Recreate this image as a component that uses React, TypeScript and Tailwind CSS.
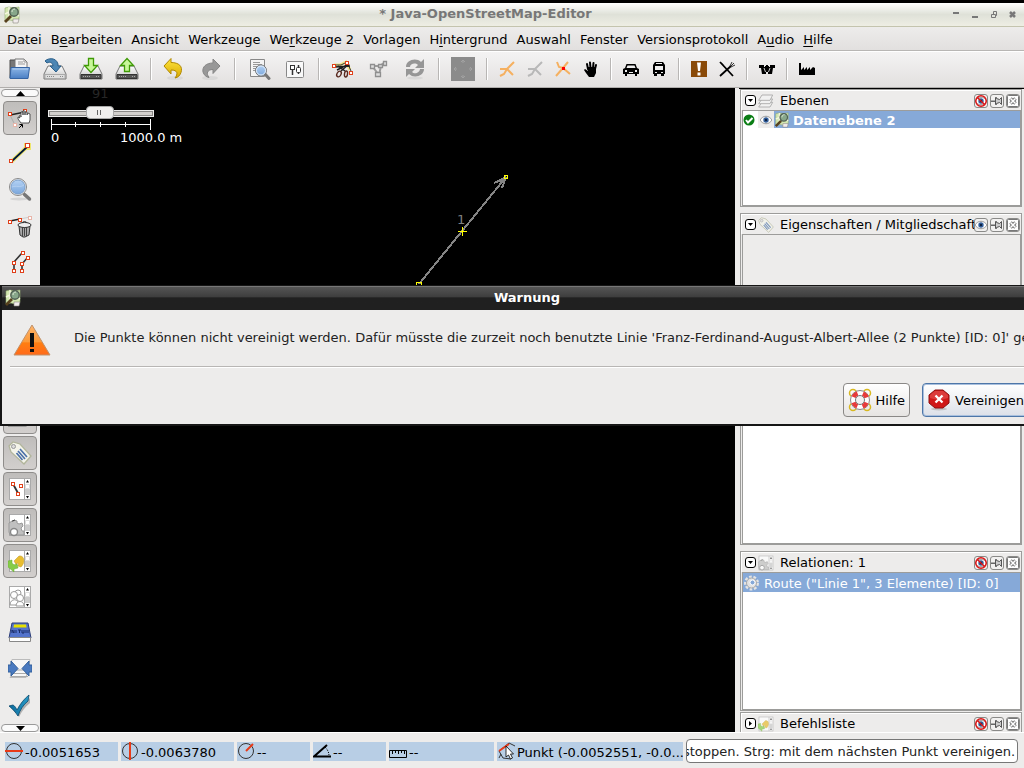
import { useEffect, useRef } from 'react';
import type { ReactNode } from 'react';

type IconProps = { size?: number; className?: string; children?: ReactNode };

function Svg({ size = 24, className = '', children }: IconProps) {
  return (
    <svg width={size} height={size} viewBox={`0 0 ${size} ${size}`} fill="none" className={`shrink-0 ${className}`} aria-hidden="true">
      {children}
    </svg>
  );
}

// Gradients shared by all icons
function Defs() {
  return (
    <svg className="absolute size-0" aria-hidden="true">
      <defs>
        <linearGradient id="folder" x2="0" y2="1">
          <stop stopColor="#8db6e6" />
          <stop offset="1" stopColor="#4a7fc4" />
        </linearGradient>
        <linearGradient id="metal" x2="0" y2="1">
          <stop stopColor="#fdfdfd" />
          <stop offset="1" stopColor="#c4c4c4" />
        </linearGradient>
        <linearGradient id="lens" x2="0" y2="1">
          <stop stopColor="#b4d2f4" />
          <stop offset="1" stopColor="#7ba7dc" />
        </linearGradient>
        <linearGradient id="gold" x2="0" y2="1">
          <stop stopColor="#ffe53e" />
          <stop offset="1" stopColor="#d8a800" />
        </linearGradient>
        <linearGradient id="warn" x2="0" y2="1">
          <stop stopColor="#ffb469" />
          <stop offset="0.55" stopColor="#fb9a3a" />
          <stop offset="0.6" stopColor="#ff7e12" />
          <stop offset="1" stopColor="#ff6a1a" />
        </linearGradient>
        <linearGradient id="tick" x2="1" y2="0">
          <stop stopColor="#0c6a9c" />
          <stop offset="1" stopColor="#2a9cc8" />
        </linearGradient>
      </defs>
    </svg>
  );
}

function Node({ x, y, faded = false, s = 3 }: { x: number; y: number; faded?: boolean; s?: number }) {
  return <rect x={x} y={y} width={s} height={s} fill="#fff" stroke={faded ? '#e8b4a8' : '#e0401a'} />;
}

function AppLogo({ size = 18 }: { size?: number }) {
  return (
    <svg width={size} height={size} viewBox="0 0 18 18" fill="none" className="shrink-0" aria-hidden="true">
      <path d="M2 2l4-1 4 1 6-1v12l-5 2-4-1-5 1z" fill="#d3e7b0" stroke="#91aa70" strokeWidth=".6" />
      <path d="M6 1v12M2 8l4-2M12 8l4 2" stroke="#f4f6df" strokeWidth="1.4" />
      <path d="M10 13h6l-1 4h-5z" fill="#f1ecec" stroke="#8b8682" strokeWidth=".6" />
      <path d="M8 10L2 16" stroke="#57411d" strokeWidth="2.8" />
      <circle cx="11" cy="6" r="4.2" fill="#87a78a" stroke="#516154" strokeWidth="1.4" />
      <path d="M9 6c0-2 1-3 3-3" stroke="#ddebd5" />
    </svg>
  );
}

/* ---- main toolbar ---- */

const OpenIcon = () => (
  <Svg>
    <path d="M3 21V3h6l1 1v17z" fill="#777" stroke="#4d4d4d" />
    <path d="M8 12V2h9l3 3v7z" fill="#f5f5f5" stroke="#777" />
    <path d="M11 5h5M11 7h7M17 2v3h3" stroke="#999" />
    <path d="M4 10.5h18.5L21 21.5H3z" fill="url(#folder)" stroke="#3464a4" />
    <path d="M5.500 12h15.500" stroke="#b5d0f1" />
  </Svg>
);

const Drive = ({ dark = false }: { dark?: boolean }) => (
  <>
    <path d="M5 9h14l4 8v5H1v-5z" fill="url(#metal)" stroke="#777" strokeLinejoin="round" />
    <path d="M2 17.500h20v4H2z" fill={dark ? '#555' : '#dedede'} stroke={dark ? '#333' : '#aaa'} />
    <path d="M4 19.500h8M17 19.500h3" stroke={dark ? '#aaa' : '#888'} strokeDasharray="1 1" />
  </>
);

const SaveIcon = () => (
  <Svg>
    <Drive />
    <path d="M2 4c3-3 11-4 13 3v2h3l-5 6-6-6h3c0-3-3-5-6-3z" fill="#4c86b4" stroke="#2a5f8a" strokeLinejoin="round" />
  </Svg>
);

const DownloadIcon = () => (
  <Svg>
    <Drive dark />
    <path d="M9.500 1.500h5v7h4L12 15.500 5.500 8.500h4z" fill="#c8f79a" stroke="#3f9a06" strokeWidth="1.300" />
  </Svg>
);

const UploadIcon = () => (
  <Svg>
    <Drive dark />
    <path d="M9.500 14.500h5v-6h4L12 1.500 5.500 8.500h4z" fill="#c8f79a" stroke="#3f9a06" strokeWidth="1.300" />
  </Svg>
);

const UndoIcon = () => (
  <Svg>
    <ellipse cx="12" cy="21" rx="8" ry="2" fill="#ccc" opacity=".5" />
    <path d="M8 1.500v4c8 0 12 4 10 10-1 3-3 5-6 5.500 3-4 3-8-4-8v4L1 9z" fill="url(#gold)" stroke="#b08800" strokeLinejoin="round" />
  </Svg>
);

const RedoIcon = () => (
  <Svg>
    <ellipse cx="11" cy="21" rx="8" ry="2" fill="#ccc" opacity=".5" />
    <path d="M14 2v4C7 6 3 10 4 15c1 3 3 5 6 5.500-3-4-2-8 4-8v4L21 9z" fill="#989898" stroke="#858585" strokeLinejoin="round" />
  </Svg>
);

const SearchDocIcon = () => (
  <Svg>
    <path d="M3.500 2.500h14v17h-14z" fill="#f4f4f4" stroke="#888" />
    <path d="M6 5.500h7M6 7.500h9M6 9.500h4M6 11.500h3M6 13.500h3" stroke="#999" />
    <path d="M18 17l4 4.500" stroke="#777" strokeWidth="3" strokeLinecap="round" />
    <circle cx="14" cy="13.500" r="5.500" fill="url(#lens)" stroke="#777" />
    <circle cx="14" cy="13.500" r="4.500" stroke="#e5effa" />
  </Svg>
);

const PrefsIcon = () => (
  <Svg>
    <rect x="3.500" y="4.500" width="17" height="16" rx="1" fill="#f9f9f9" stroke="#888" />
    <rect x="7.500" y="8.500" width="4" height="4" fill="#fff" stroke="#333" />
    <path d="M9.500 13v5M15.500 8v2M15.500 15v2" stroke="#333" strokeWidth="1.500" />
    <rect x="13.500" y="10.500" width="4" height="5" rx="1" fill="#fff" stroke="#333" />
  </Svg>
);

const SplitIcon = () => (
  <Svg>
    <path d="M3 8h6l6-3 4 8" stroke="#f0e68a" strokeWidth="3" />
    <path d="M3 8h7l6-3 4 9" stroke="#333" />
    <path d="M4 10l15-1M6 13l12-6" stroke="#1c1c1c" strokeWidth="1.500" />
    <ellipse cx="8" cy="17" rx="2" ry="3" transform="rotate(30 8 17)" stroke="#5a2a20" strokeWidth="1.400" />
    <ellipse cx="15" cy="17" rx="1.500" ry="3" transform="rotate(10 15 17)" stroke="#5a2a20" strokeWidth="1.400" />
    <path d="M10 14l8-7M14 14l-7-5" stroke="#222" strokeWidth="1.500" />
    <Node x={1.5} y={7.5} /><Node x={14.5} y={4.5} /><Node x={18.5} y={14.5} />
  </Svg>
);

const CombineGreyIcon = () => (
  <Svg>
    <path d="M5 9l7 9M12 18l2-9M5 9h8l5-4" stroke="#9c9c9c" strokeWidth="2" />
    <g fill="#ddd" stroke="#8f8f8f" strokeWidth="1.300">
      <path d="M3.500 7.500h4v4h-4zM8.500 15.500h5v4h-5zM16.500 4.500h3v4h-3zM11.500 7.500h4v3h-4z" />
    </g>
  </Svg>
);

const RefreshIcon = () => (
  <Svg>
    <ellipse cx="12" cy="21" rx="8" ry="1.500" fill="#ccc" opacity=".5" />
    <path d="M3 10c0-7 10-10 15-5l3-3v9h-9l3-3c-3-3-8-1-8 2z" fill="#969696" />
    <path d="M21 12c0 7-10 10-15 5l-3 3v-8h9l-3 3c3 3 8 0 8-3z" fill="#969696" />
  </Svg>
);

const MoveIcon = () => (
  <Svg>
    <path d="M0 0h24v24H0z" fill="#8b8b8b" />
    <path d="M12 6V3M10 5l2-2 2 2M12 18v3M10 19l2 2 2-2M6 12H3M5 10l-2 2 2 2M18 12h3M19 10l2 2-2 2" stroke="#a2a2a2" />
  </Svg>
);

const Way = ({ color, dot = false }: { color: string; dot?: boolean }) => (
  <Svg size={16}>
    {dot ? (
      <>
        <path d="M2 1l2 5 4 1 7 6M13 1L8 7l-7 8" stroke={color} strokeWidth="2" />
        <rect x="7" y="6" width="3" height="3" fill="#f00" />
      </>
    ) : (
      <path d="M15 1L8 8H3M8 8l6 6M1 15l4-2 3-5M3 8H1" stroke={color} strokeWidth="2" />
    )}
  </Svg>
);

const HandIcon = () => (
  <Svg size={16}>
    <path d="M5 8L4 3M7.500 7L7 1.500M10 7l.500-5M12 8l1-4" stroke="#000" strokeWidth="2" strokeLinecap="round" />
    <path d="M4 6h9v6l-2 4H6l-3-4-2-3 1-1 3 2z" fill="#000" />
  </Svg>
);

const CarIcon = () => (
  <Svg size={16}>
    <path d="M3.500 3h9L14 7l2 1v5h-2v2h-2v-2H4v2H2v-2H0V8l2-1z" fill="#000" />
    <path d="M4.500 4.500h7l1 2.500h-9zM2 9h2v2H2zM12 9h2v2h-2zM6 11h4v1H6z" fill="#eee" />
  </Svg>
);

const BusIcon = () => (
  <Svg size={16}>
    <path d="M4 1h8l2 3v9h-1v2h-3v-2H6v2H3v-2H2V4z" fill="#000" />
    <path d="M4 5h8v4H4zM5 2h6v1H5zM4 11h2v1H4zM10 11h2v1h-2z" fill="#eee" />
  </Svg>
);

const ExclamIcon = () => (
  <Svg size={16}>
    <path d="M0 0h16v16H0z" fill="#8a4a08" />
    <path d="M6 1.500h4L9 10H7zM6.500 11.500h3v3h-3z" fill="#fff" />
  </Svg>
);

const FoodIcon = () => (
  <Svg size={16}>
    <path d="M1 1l13 14M1 15L12 5" stroke="#000" strokeWidth="1.800" />
    <path d="M11 5l2-4M12 5l3-3M12 6l4-2" stroke="#333" />
    <path d="M1 1l3 2 3 5z" fill="#000" />
  </Svg>
);

const CastleIcon = () => (
  <Svg size={16}>
    <path d="M0 4h5v2h1V5h1V4h2v1h1v1h1V4h5v3h-2l-1 6H9v-2H7v2H3L2 7H0z" fill="#000" />
    <path d="M5 7l1.500 4M11 7l-1.500 4" stroke="#ccc" />
  </Svg>
);

const FactoryIcon = () => (
  <Svg size={16}>
    <path d="M0 2h2v7l3-3v3l3-3v3l3-3v3l3-3 2 1v7H0z" fill="#000" />
  </Svg>
);

/* ---- side toolbar ---- */

const SelectIcon = () => (
  <Svg>
    <path d="M2 9l15-3" stroke="#222" strokeWidth="1.500" />
    <path d="M2 9l5 10" stroke="#aaa" />
    <Node x={0.5} y={6.5} /><Node x={15.5} y={3.5} /><Node x={5.5} y={17.5} faded />
    <path d="M11 10c1-1 2 0 2 1V6h2v3-4h2v4-3h2v3l1-2 2 1v6l-1 3h-8l-3-4v-2l2 1z" fill="#fff" stroke="#333" strokeWidth=".8" />
    <path d="M11 22l3-3M11.500 18.500h3v3" stroke="#000" />
  </Svg>
);

const DrawIcon = () => (
  <Svg>
    <path d="M3 20L20 4" stroke="#f1e97c" strokeWidth="4" />
    <path d="M16 1h7v7h-7z" fill="#eee66c" />
    <path d="M4 19L19 5" stroke="#001838" strokeWidth="1.800" />
    <Node x={1.5} y={17.5} /><Node x={17.5} y={1.5} s={4} />
  </Svg>
);

const ZoomIcon = () => (
  <Svg>
    <ellipse cx="11" cy="21" rx="9" ry="1.500" fill="#d5d5d5" />
    <path d="M16.500 16.500l5 4.500" stroke="#777" strokeWidth="3.500" strokeLinecap="round" />
    <circle cx="10" cy="9" r="8.500" fill="#eee" stroke="#888" />
    <circle cx="10" cy="9" r="7" fill="url(#lens)" stroke="#7a9fcc" />
    <path d="M4 9c4-2 8 1 12-2" stroke="#c5dbf5" opacity=".6" />
  </Svg>
);

const DeleteIcon = () => (
  <Svg>
    <path d="M2 7l10-2" stroke="#222" strokeWidth="1.300" />
    <path d="M12 5l10-2" stroke="#ccc" />
    <Node x={0.5} y={6.5} /><Node x={10.5} y={4.5} /><Node x={20.5} y={2.5} faded />
    <path d="M11 12h11l-1 9-4 2h-2l-3-2z" fill="#aaa" stroke="#333" />
    <path d="M14.500 13v9M16.500 13v9M18.500 13v9" stroke="#444" />
    <ellipse cx="16.500" cy="11" rx="6.500" ry="2.500" fill="#eee" stroke="#333" />
    <path d="M14 9c1-2 4-2 5 0" stroke="#333" />
  </Svg>
);

const ParallelIcon = () => (
  <Svg>
    <path d="M6 12l8-9M6 12v8M14 14l6-7M14 14v6" stroke="#333" strokeWidth="1.600" />
    <Node x={13.5} y={1.5} /><Node x={4.5} y={11.5} /><Node x={4.5} y={19.5} />
    <Node x={18.5} y={6.5} /><Node x={12.5} y={12.5} /><Node x={12.5} y={19.5} />
  </Svg>
);

const LayersIcon = ({ size = 24 }: { size?: number }) => (
  <svg width={size} height={size} viewBox="0 0 24 24" fill="#f4f4f4" stroke="#8c8c8c" strokeWidth="1.300" className="shrink-0" aria-hidden="true">
    <path d="M6 14h16l-4 7H1z" />
    <path d="M6 9h16l-4 7H1z" />
    <path d="M6 3h16l-4 8H1z" />
  </svg>
);

const TagIcon = ({ size = 24 }: { size?: number }) => (
  <svg width={size} height={size} viewBox="0 0 24 24" fill="none" className="shrink-0" aria-hidden="true">
    <path d="M1 5l4-4 7 2 11 12-7 8L3 11z" fill="#f4f4ea" stroke="#b1b59b" strokeWidth="1.300" />
    <circle cx="5.500" cy="5.500" r="2" fill="#ddd" stroke="#999" />
    <path d="M12 8l7 8M10 10l7 8M8.500 12l6 7" stroke="#4c71a8" strokeWidth="1.700" />
  </svg>
);

// White list box with a tiny scroll bar; the children sit in the list
function ListIcon({ size = 24, children }: { size?: number; children: ReactNode }) {
  return (
    <svg width={size} height={size} viewBox="0 0 24 24" fill="none" className="shrink-0" aria-hidden="true">
      <rect x="1.500" y="1.500" width="21" height="21" fill="#fff" stroke="#aaa" />
      <path d="M16.500 1.500v21" stroke="#aaa" />
      <path d="M17 12h5v6h-5z" fill="#ccc" />
      <path d="M17.500 7.500h4v4h-4z" stroke="#ddd" />
      <path d="M18 5.500L19.500 3 21 5.500zM18 19l1.500 2.500L21 19z" fill="#000" />
      {children}
    </svg>
  );
}

const SelectionListIcon = () => (
  <ListIcon>
    <path d="M5 7l5 9" stroke="#333" strokeWidth="1.800" />
    <Node x={3.5} y={5.5} /><Node x={11.5} y={7.5} /><Node x={8.5} y={15.5} />
  </ListIcon>
);

const RelationListIcon = ({ size }: { size?: number }) => (
  <ListIcon size={size}>
    <path d="M1 10l3-2 1 1 1-2 3 1v2l2 1 3-1 1 3-2 2 1 3h2v4H2l-1-3z" fill="#c0c0c0" stroke="#999" />
    <circle cx="6" cy="19" r="3.500" fill="#fff" stroke="#888" strokeWidth="1.400" />
    <path d="M4 8l3-1" stroke="#444" />
  </ListIcon>
);

const CommandListIcon = ({ size }: { size?: number }) => (
  <ListIcon size={size}>
    <path d="M6 12l5-5c5-1 7 6 2 11l-3-1c1-2 0-3-1-3v3z" fill="#e8bd30" stroke="#bd9520" strokeWidth=".5" />
    <path d="M0 12l4-1v3c1 2 3 2 5 1l1 4-4 1v3l-6-5z" fill="#86cc48" stroke="#64a832" strokeWidth=".5" />
  </ListIcon>
);

const AuthorListIcon = () => (
  <ListIcon>
    <g fill="#fff" stroke="#999">
      <circle cx="10" cy="8" r="3" />
      <path d="M2 20c0-7 9-7 9 0z" />
      <circle cx="6" cy="10" r="3.500" />
      <path d="M8 21c0-6 8-6 8 0z" />
      <circle cx="12" cy="13" r="3.500" />
    </g>
  </ListIcon>
);

const HistoryIcon = () => (
  <Svg>
    <path d="M4 2h16l3 15H1z" fill="#5474cc" stroke="#2c3e78" />
    <path d="M6 3.500h12l.600 3H5.400z" fill="#e6e000" />
    <path d="M4 12V9l2 3V9M8 9v3M10 9h3M11.500 9v3M14 9v3h2V9M18 9v3M20 9v3" stroke="#1a2c66" />
    <path d="M1.500 16.500h21v4h-21z" fill="#fff" stroke="#888" />
  </Svg>
);

const ConflictIcon = () => (
  <Svg>
    <path d="M4 2.500h18l-4 18H2l3-4-3-4z" fill="#f7f7f7" stroke="#bbb" />
    <path d="M3 16.500h17M3 19.500h17M5 13h14" stroke="#aaa" />
    <path d="M0 8h3V4l7 7.500L3 19v-4H0zM24 8h-3V4l-7 7.500 7 7.500v-4h3z" fill="#4a7ac0" stroke="#33609c" />
  </Svg>
);

const ValidateIcon = () => (
  <Svg>
    <path d="M3 14c3 1 4 3 6 7 4-6 7-11 13-16v5c-5 4-8 8-11 14C9 21 6 18 3 15z" fill="#888" opacity=".6" />
    <path d="M1 13l4-1c2 1 3 3 4 5 3-6 7-11 12-15l-1 6c-5 4-8 9-10 15-2-3-5-7-9-10z" fill="url(#tick)" stroke="#0a496c" strokeWidth=".8" />
  </Svg>
);

/* ---- panel parts ---- */

const Eye = ({ off = false }: { off?: boolean }) => (
  <Svg size={12}>
    <path d="M0 6c3-5 9-5 12 0-3 5-9 5-12 0z" fill="#fff" stroke="#999" />
    <circle cx="6" cy="6" r="2.700" fill="#34609c" />
    <circle cx="6" cy="6" r="1.200" fill="#0d2040" />
    {off && (
      <>
        <circle cx="6" cy="6" r="5.200" stroke="#dc1414" strokeWidth="1.500" />
        <path d="M2.500 2.500l7 7" stroke="#dc1414" strokeWidth="1.500" />
      </>
    )}
  </Svg>
);

const Pin = () => (
  <Svg size={12}>
    <path d="M0 5.500h5V7H0z" fill="#666" />
    <path d="M4.500 2.500h1v1l3 1 2-2v7l-2-2-3 1v1h-1z" fill="#ccc" stroke="#555" />
  </Svg>
);

const CloseBox = () => (
  <Svg size={12}>
    <rect x=".5" y=".5" width="11" height="11" rx="1" fill="#fff" stroke="#777" />
    <path d="M3.500 3.500l5 5M8.500 3.500l-5 5" stroke="#777" strokeWidth="3.500" />
    <path d="M3.500 3.500l5 5M8.500 3.500l-5 5" stroke="#fff" strokeWidth="1.500" />
  </Svg>
);

const GearIcon = () => (
  <Svg size={16}>
    <circle cx="7.500" cy="8" r="6" stroke="#e4e4e4" strokeWidth="3" strokeDasharray="2.600 1.600" />
    <circle cx="7.500" cy="8" r="5" fill="#e2e2e2" stroke="#aaa" />
    <circle cx="8.500" cy="7.500" r="2.500" fill="#86a9d8" stroke="#fff" />
  </Svg>
);

const CheckBadge = () => (
  <Svg size={12}>
    <circle cx="6" cy="6" r="5.500" fill="#0a7d14" />
    <path d="M3 6l2 2.500L9.500 4" stroke="#fff" strokeWidth="2" />
  </Svg>
);

function HeaderButton({ label, children }: { label: string; children: ReactNode }) {
  return (
    <button aria-label={label} className="flex size-[14px] items-center justify-center rounded-[3px] border border-[#8a8a88] bg-[#f2f1f0]">
      {children}
    </button>
  );
}

type PanelProps = {
  title: string;
  icon: ReactNode;
  open?: boolean;
  hidden?: boolean;
  className?: string;
  children?: ReactNode;
};

function Panel({ title, icon, open = true, hidden = true, className = '', children }: PanelProps) {
  return (
    <section className={`flex flex-col border border-[#9c9c9a] ${className}`}>
      <header className="flex h-5 shrink-0 items-center border-t border-l border-white pl-[3px]">
        <button aria-label={open ? 'Einklappen' : 'Ausklappen'} className="flex size-[11px] items-center justify-center rounded-[3px] border border-black bg-white">
          <svg width="5" height="5" viewBox="0 0 5 5" aria-hidden="true">
            <path d={open ? 'M0 1h5L2.500 4z' : 'M1 0v5l3-2.500z'} fill="#000" />
          </svg>
        </button>
        <span className="mx-[2px] flex w-4 justify-center opacity-70">{icon}</span>
        <h2 className="min-w-0 flex-1 pl-1 whitespace-nowrap">{title}</h2>
        <div className="flex gap-[2px] pr-px">
          <HeaderButton label="Anzeigen"><Eye off={hidden} /></HeaderButton>
          <HeaderButton label="Anheften"><Pin /></HeaderButton>
          <HeaderButton label="Schließen"><CloseBox /></HeaderButton>
        </div>
      </header>
      {children}
    </section>
  );
}

const menus: [string, string, string][] = [
  ['Datei', '', ''],
  ['B', 'e', 'arbeiten'],
  ['Ansicht', '', ''],
  ['Werkzeuge', '', ''],
  ['We', 'r', 'kzeuge 2'],
  ['Vorlagen', '', ''],
  ['H', 'i', 'ntergrund'],
  ['Auswahl', '', ''],
  ['Fenster', '', ''],
  ['Versionsprotokoll', '', ''],
  ['A', 'u', 'dio'],
  ['', 'H', 'ilfe'],
];

const toolGroups: { label: string; icon: ReactNode; small?: boolean }[][] = [
  [
    { label: 'Öffnen', icon: <OpenIcon /> },
    { label: 'Speichern', icon: <SaveIcon /> },
    { label: 'Herunterladen', icon: <DownloadIcon /> },
    { label: 'Hochladen', icon: <UploadIcon /> },
  ],
  [
    { label: 'Rückgängig', icon: <UndoIcon /> },
    { label: 'Wiederholen', icon: <RedoIcon /> },
  ],
  [
    { label: 'Suchen', icon: <SearchDocIcon /> },
    { label: 'Einstellungen', icon: <PrefsIcon /> },
  ],
  [
    { label: 'Linie aufspalten', icon: <SplitIcon /> },
    { label: 'Linien verbinden', icon: <CombineGreyIcon /> },
    { label: 'Aktualisieren', icon: <RefreshIcon /> },
  ],
  [{ label: 'Verschieben', icon: <MoveIcon /> }],
  [
    { label: 'Straße', icon: <Way color="#f5b060" />, small: true },
    { label: 'Weg', icon: <Way color="#b8b8b8" />, small: true },
    { label: 'Kreuzung', icon: <Way color="#f5b060" dot />, small: true },
    { label: 'Barriere', icon: <HandIcon />, small: true },
  ],
  [
    { label: 'Auto', icon: <CarIcon />, small: true },
    { label: 'Bus', icon: <BusIcon />, small: true },
  ],
  [
    { label: 'Hinweis', icon: <ExclamIcon />, small: true },
    { label: 'Restaurant', icon: <FoodIcon />, small: true },
  ],
  [{ label: 'Burg', icon: <CastleIcon />, small: true }],
  [{ label: 'Fabrik', icon: <FactoryIcon />, small: true }],
];

const modes = [
  { label: 'Auswählen', icon: <SelectIcon />, active: true },
  { label: 'Zeichnen', icon: <DrawIcon /> },
  { label: 'Zoom', icon: <ZoomIcon /> },
  { label: 'Löschen', icon: <DeleteIcon /> },
  { label: 'Parallel', icon: <ParallelIcon /> },
  { label: 'Extrudieren', icon: <DrawIcon /> },
  { label: 'Genauigkeit', icon: <ParallelIcon /> },
];

const dialogs = [
  { label: 'Karte', icon: <ZoomIcon /> },
  { label: 'Ebenen', icon: <LayersIcon />, active: true },
  { label: 'Eigenschaften', icon: <TagIcon />, active: true },
  { label: 'Auswahl', icon: <SelectionListIcon />, active: true },
  { label: 'Relationen', icon: <RelationListIcon />, active: true },
  { label: 'Befehlsliste', icon: <CommandListIcon />, active: true },
  { label: 'Autoren', icon: <AuthorListIcon /> },
  { label: 'Verlauf', icon: <HistoryIcon /> },
  { label: 'Konflikte', icon: <ConflictIcon /> },
  { label: 'Prüfung', icon: <ValidateIcon /> },
];

function SideButton({ label, icon, active }: { label: string; icon: ReactNode; active?: boolean }) {
  return (
    <button
      aria-label={label}
      className={`flex size-[34px] shrink-0 items-center justify-center rounded border ${
        active ? 'border-[#8f8d8b] bg-linear-to-b from-[#bfbdbb] to-[#d2cfcd]' : 'border-transparent'
      }`}
    >
      {icon}
    </button>
  );
}

function ScrollButton({ up = false }: { up?: boolean }) {
  return (
    <button
      aria-label={up ? 'Nach oben' : 'Nach unten'}
      className="mx-px flex h-2 shrink-0 items-center justify-center rounded-sm border border-[#999] bg-[#fafafa]"
    >
      <svg width="9" height="5" viewBox="0 0 9 5" aria-hidden="true">
        <path d={up ? 'M0 5h9L4.500 0z' : 'M0 0h9L4.500 5z'} fill="#000" />
      </svg>
    </button>
  );
}

function MapView() {
  return (
    <main className="relative min-w-0 flex-1 overflow-hidden bg-black">
      <span className="absolute top-0 left-[52px] leading-3 text-[#262626]">91</span>
      <div className="absolute top-[17px] left-[9px] flex">
        <input
          type="range"
          aria-label="Zoomstufe"
          min="0"
          max="100"
          defaultValue="48"
          className="h-4 w-[104px] appearance-none bg-transparent [&::-webkit-slider-runnable-track]:h-[5px] [&::-webkit-slider-runnable-track]:border [&::-webkit-slider-runnable-track]:border-[#8a8886] [&::-webkit-slider-runnable-track]:bg-[#d2cfcc] [&::-webkit-slider-runnable-track]:outline [&::-webkit-slider-runnable-track]:outline-[#edeceb] [&::-webkit-slider-thumb]:relative [&::-webkit-slider-thumb]:mt-[-6px] [&::-webkit-slider-thumb]:h-[13px] [&::-webkit-slider-thumb]:w-7 [&::-webkit-slider-thumb]:appearance-none [&::-webkit-slider-thumb]:rounded-sm [&::-webkit-slider-thumb]:border [&::-webkit-slider-thumb]:border-[#aaa] [&::-webkit-slider-thumb]:bg-[#f0efee]"
        />
        {/* Grip lines on the slider knob */}
        <span className="pointer-events-none absolute top-[5px] left-[48px] h-[5px] w-1 border-x border-[#666]" />
      </div>
      {/* Scale bar */}
      <svg width="110" height="14" viewBox="0 0 110 14" stroke="#fff" fill="none" className="absolute top-[30px] left-2" shapeRendering="crispEdges" aria-hidden="true">
        <path d="M3.500 1v11M3 6.500h100M102.500 1v11M27.500 4v5M52.500 4v5M77.500 4v5" />
      </svg>
      <span className="absolute top-[42px] left-[11px] text-white">0</span>
      <span className="absolute top-[42px] left-20 text-white">1000.0 m</span>

      {/* Way with its two nodes */}
      <svg width="120" height="125" viewBox="0 0 120 125" fill="none" className="absolute top-[80px] left-[365px]" shapeRendering="crispEdges" aria-hidden="true">
        <path d="M14 116L101 9M101 9l-12 6M101 9l-4 11M99 12l-8 2" stroke="#858585" strokeWidth="2" />
        <path d="M99.500 7.500h3v3h-3zM11.500 114.500h5v4h-5zM57.500 59v9M53 63.500h9" stroke="#ff0" />
      </svg>
      <span className="absolute top-[124px] left-[417px] text-[#808080]">1</span>
    </main>
  );
}

function WarningDialog() {
  return (
    <div role="dialog" aria-label="Warnung" className="absolute top-[285px] -right-[30px] left-0 border-2 border-t border-[#161616] bg-[#edeceb]">
      <div className="flex h-6 items-center border-t border-[#777] bg-linear-to-b from-[#555] from-0% via-[#3d3d3d] via-45% to-[#202020] to-46% px-[2px] pb-[2px]">
        <AppLogo />
        <h1 className="flex-1 text-center font-bold text-white">Warnung</h1>
        <span className="w-[18px]" />
      </div>
      <div className="flex h-14 items-center gap-5 pl-[10px]">
        <svg width="42" height="34" viewBox="0 0 42 34" className="mt-1 shrink-0" aria-hidden="true">
          <path d="M20 2L38 32H2z" fill="url(#warn)" stroke="#c0926c" strokeLinejoin="round" />
          <path d="M18 10h4v14h-4zM18 26h4v3h-4z" fill="#111" />
        </svg>
        <p className="whitespace-nowrap text-[#222]">
          Die Punkte können nicht vereinigt werden. Dafür müsste die zurzeit noch benutzte Linie 'Franz-Ferdinand-August-Albert-Allee (2 Punkte) [ID: 0]' gelös
        </p>
      </div>
      <div className="mx-2 border-t border-b border-t-[#b8b6b4] border-b-white" />
      <div className="flex justify-end gap-3 pt-[15px] pr-[19px] pb-[7px]">
        <button className="flex h-[34px] items-center gap-1 rounded border border-[#8a8886] bg-linear-to-b from-white to-[#e6e4e2] px-1">
          <Svg>
            <circle cx="5" cy="5" r="3.500" stroke="#d8b820" strokeWidth="1.500" />
            <circle cx="19" cy="5" r="3.500" stroke="#d8b820" strokeWidth="1.500" />
            <circle cx="5" cy="19" r="3.500" stroke="#d8b820" strokeWidth="1.500" />
            <circle cx="19" cy="19" r="3.500" stroke="#d8b820" strokeWidth="1.500" />
            <circle cx="12" cy="12" r="9.500" fill="#fff" stroke="#888" />
            <circle cx="12" cy="12" r="7" stroke="#e83a3a" strokeWidth="4.500" strokeDasharray="5.500 5.500" strokeDashoffset="-2.750" />
            <circle cx="12" cy="12" r="4.500" fill="#f2f1f0" stroke="#777" />
          </Svg>
          <span className="pt-[2px]">Hilfe</span>
        </button>
        <button className="flex h-[34px] items-center gap-1 rounded border border-[#4d76a8] bg-linear-to-b from-white to-[#dce0e8] px-1 pr-2 ring-1 ring-[#a9c0de] ring-inset">
          <Svg>
            <ellipse cx="12" cy="21" rx="8" ry="1.500" fill="#aaa" opacity=".6" />
            <path d="M8 2h8l6 5v8l-6 5H8l-6-5V7z" fill="#d01818" stroke="#8c0f0f" />
            <path d="M8 3h8l5 4v3c-6 2-12 2-18 0V7z" fill="#e86060" opacity=".5" />
            <path d="M8.500 7.500l7 7M15.500 7.500l-7 7" stroke="#fff" strokeWidth="2.300" />
          </Svg>
          <span className="pt-[2px]">Vereinigen</span>
        </button>
      </div>
    </div>
  );
}

function StatusItem({ className, icon, children }: { className: string; icon: ReactNode; children: ReactNode }) {
  return (
    <div className={`flex h-[19px] shrink-0 items-center gap-[2px] bg-[#b8cee5] whitespace-nowrap ${className}`}>
      {icon}
      <span className="pt-[3px]">{children}</span>
    </div>
  );
}

function StatusBar() {
  const help = useRef<HTMLInputElement>(null);

  // Keep the end of the help text in view
  useEffect(() => {
    if (help.current) help.current.scrollLeft = help.current.scrollWidth;
  }, []);

  return (
    <footer className="flex h-9 shrink-0 items-center gap-[3px] border-t border-white pt-px pr-[6px] pl-[5px]">
      <StatusItem className="w-[113px]" icon={<Svg size={18}><circle cx="9" cy="9" r="7.500" stroke="#333" /><path d="M0 9h18" stroke="#e83a18" strokeWidth="2" /></Svg>}>-0.0051653</StatusItem>
      <StatusItem className="w-[113px]" icon={<Svg size={18}><circle cx="9" cy="9" r="7.500" stroke="#333" /><path d="M9 0v18" stroke="#e83a18" strokeWidth="2" /></Svg>}>-0.0063780</StatusItem>
      <StatusItem className="w-[73px]" icon={<Svg size={18}><circle cx="9" cy="9" r="7.500" stroke="#333" /><path d="M9 9l7-7" stroke="#e83a18" strokeWidth="2" /></Svg>}>--</StatusItem>
      <StatusItem className="w-[73px]" icon={<Svg size={18}><path d="M14 3L1 14.500h17" stroke="#000" strokeWidth="2" /><path d="M12 5c3 3 4 6 4 9" stroke="#000" strokeDasharray="1 1" /></Svg>}>--</StatusItem>
      <StatusItem className="w-[105px]" icon={<Svg size={18}><path d="M.500 8.500h17v7H.500zM3.500 8v4M6.500 8v3M9.500 8v4M12.500 8v3M15.500 8v4" stroke="#000" /></Svg>}>--</StatusItem>
      <StatusItem
        className="w-[186px]"
        icon={
          <Svg size={18}>
            <path d="M2 9l10-8 6 3M2 9l4 7 8 1M4 12l-2 4" stroke="#333" />
            <path d="M2 9l10-7" stroke="#e83a18" strokeWidth="2" />
            <path d="M9 4v11l2.500-2 2 4 2-1-2-4h3z" fill="#fff" stroke="#000" strokeWidth=".8" />
          </Svg>
        }
      >
        Punkt (-0.0052551, -0.0...
      </StatusItem>
      <input
        ref={help}
        readOnly
        aria-label="Hilfetext"
        defaultValue="stoppen. Strg: mit dem nächsten Punkt vereinigen."
        className="h-6 min-w-0 flex-1 rounded border border-[#777] bg-white pr-[2px] text-[#222]"
      />
    </footer>
  );
}

export default function App() {
  return (
    <div className="relative flex h-screen flex-col overflow-hidden bg-[#edeceb] font-['DejaVu_Sans',sans-serif] text-[13px] leading-4 text-black">
      <Defs />

      {/* Title bar */}
      <div className="flex h-[27px] shrink-0 items-center border-t-[3px] border-b border-t-black border-b-[#c4c4ae] bg-linear-to-b from-white via-[#dfe1d8] via-50% to-[#eeeee4] px-[3px]">
        <AppLogo />
        <span className="flex-1 pb-[2px] text-center font-bold text-[#777]">* Java-OpenStreetMap-Editor</span>
        <div className="flex gap-2 pr-[3px] text-[#777]">
          <button aria-label="Einrollen"><Svg size={11}><path d="M3 4h6" stroke="currentColor" strokeWidth="2" /></Svg></button>
          <button aria-label="Minimieren"><Svg size={11}><path d="M3 8h6" stroke="currentColor" strokeWidth="2" /></Svg></button>
          <button aria-label="Wiederherstellen"><Svg size={11}><path d="M3.500 5.500h4v3h-4zM5.500 5V2.500h3v4H8" stroke="currentColor" /></Svg></button>
          <button aria-label="Fenster schließen"><Svg size={11}><path d="M3 3l5 5M8 3L3 8" stroke="currentColor" strokeWidth="2.500" /></Svg></button>
        </div>
      </div>

      {/* Menus */}
      <nav className="flex h-6 shrink-0 items-center gap-[9px] border-b border-[#b8b6b4] bg-linear-to-b from-[#edeceb] to-[#e2e0df] pt-[2px] pl-[7px]">
        {menus.map(([before, key, after]) => (
          <button key={before + key + after} className="whitespace-nowrap">
            {before}
            <span className="underline underline-offset-2">{key}</span>
            {after}
          </button>
        ))}
      </nav>

      {/* Toolbar */}
      <div className="flex h-[37px] shrink-0 items-center border-t border-b border-t-white border-b-[#b0aeac] bg-linear-to-b from-[#f4f3f3] to-[#e2e0df] px-px pb-[2px]">
        {toolGroups.map((group, i) => (
          <div key={i} className="flex items-center">
            {i > 0 && <span className="mx-[5px] h-[22px] w-[2px] border-r border-l border-r-white border-l-[#b8b6b4]" />}
            {group.map((tool) => (
              <button key={tool.label} aria-label={tool.label} className={`flex h-8 items-center justify-center ${tool.small ? 'w-7' : 'w-9'}`}>
                {tool.icon}
              </button>
            ))}
          </div>
        ))}
      </div>

      <div className="flex min-h-0 flex-1">
        <aside className="flex w-10 shrink-0 flex-col pt-px">
          <ScrollButton up />
          <div className="flex min-h-0 flex-1 flex-col items-center gap-[2px] overflow-hidden pt-1">
            {modes.map((m) => <SideButton key={m.label} {...m} />)}
            <span className="h-[9px] w-full shrink-0" />
            {dialogs.map((d) => <SideButton key={d.label} {...d} />)}
          </div>
          <ScrollButton />
        </aside>

        <MapView />

        <aside className="ml-1 flex w-[285px] shrink-0 flex-col border-t border-black pr-[2px] pl-px">
          <Panel title="Ebenen" icon={<LayersIcon size={16} />} className="h-[118px] shrink-0">
            <div className="ml-px flex-1 border border-[#9c9c9a] bg-white">
              <div className="flex h-[17px] items-center">
                <span className="flex w-[15px]"><CheckBadge /></span>
                <span className="flex w-4 self-stretch items-center justify-center bg-[#edeceb]"><Eye /></span>
                <span className="flex flex-1 items-center gap-[3px] self-stretch bg-[#86a9d8] font-bold text-white">
                  <AppLogo size={16} />
                  <span className="pt-[3px]">Datenebene 2</span>
                </span>
              </div>
            </div>
          </Panel>
          <Panel title="Eigenschaften / Mitgliedschaft" icon={<TagIcon size={16} />} hidden={false} className="mt-[6px] min-h-0 flex-1">
            <div className="ml-px flex-1 border border-[#9c9c9a]" />
            <div className="ml-px flex-1 border border-[#9c9c9a] bg-white" />
          </Panel>
          <Panel title="Relationen: 1" icon={<RelationListIcon size={16} />} className="mt-[6px] h-[160px] shrink-0">
            <div className="ml-px flex-1 border border-[#9c9c9a] bg-white">
              <div className="flex h-[19px] items-center gap-1 bg-[#86a9d8] pl-px text-white">
                <GearIcon />
                <span className="pt-[3px]">Route ("Linie 1", 3 Elemente) [ID: 0]</span>
              </div>
            </div>
          </Panel>
          <Panel title="Befehlsliste" icon={<CommandListIcon size={16} />} open={false} className="mt-px h-5 shrink-0 border-b-0" />
        </aside>
      </div>

      <StatusBar />
      <WarningDialog />
    </div>
  );
}
